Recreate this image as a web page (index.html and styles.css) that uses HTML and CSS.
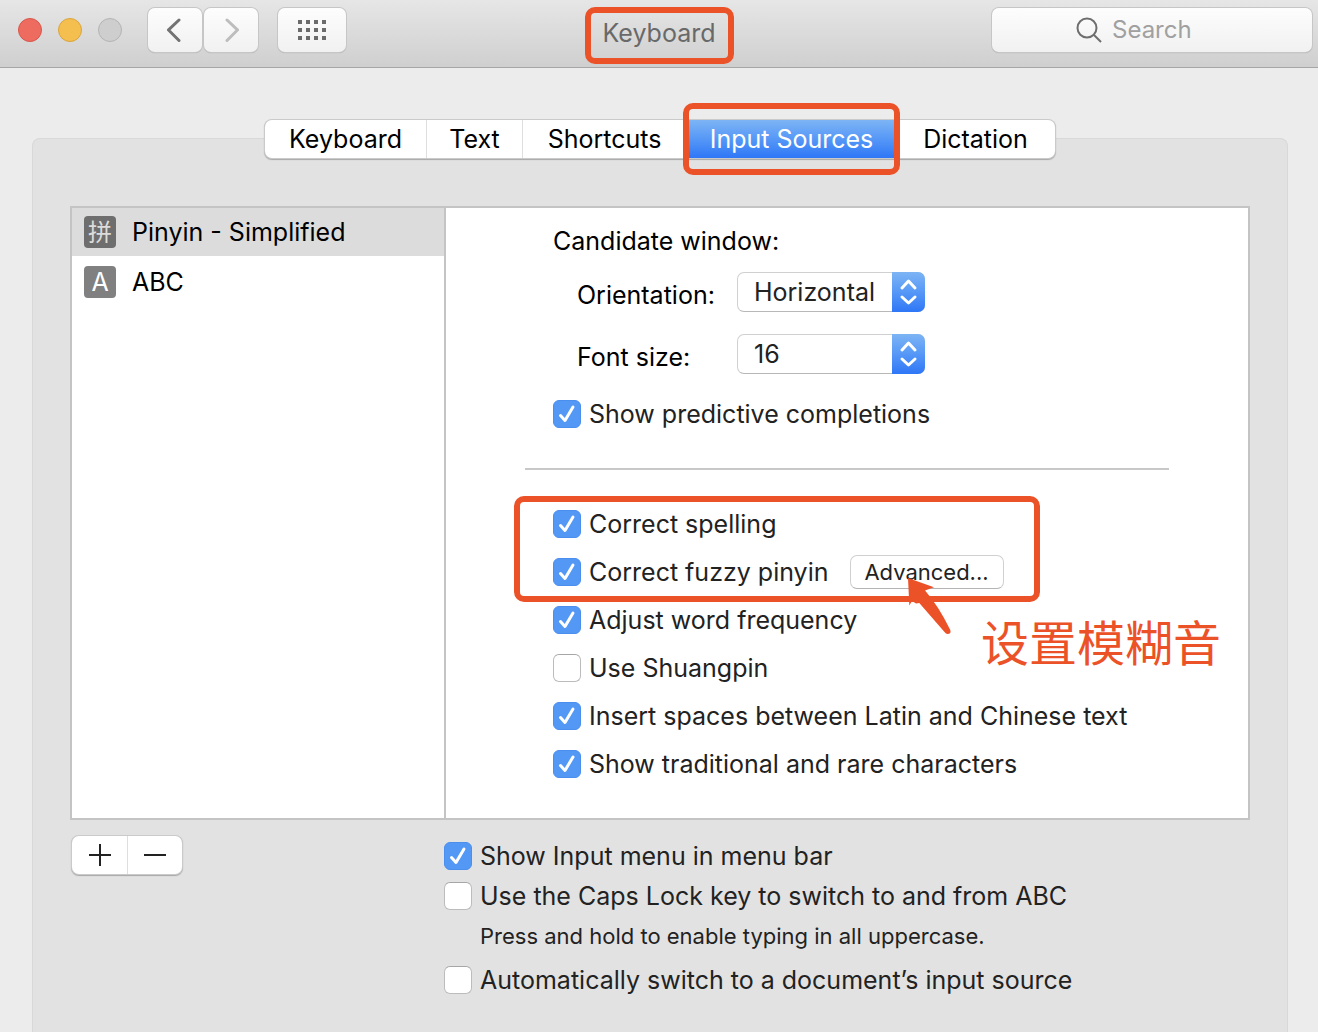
FILE: index.html
```html
<!DOCTYPE html>
<html lang="en">
<head>
<meta charset="utf-8">
<meta name="viewport" content="width=device-width, initial-scale=1">
<title>Keyboard</title>
<link rel="stylesheet" href="styles.css">
</head>
<body>
<header class="titlebar">
  <div class="titlebar-left">
    <div class="lights">
      <button class="light light-close" type="button" aria-label="Close"></button>
      <button class="light light-minimize" type="button" aria-label="Minimize"></button>
      <button class="light" type="button" aria-label="Zoom" disabled></button>
    </div>
    <nav class="history" aria-label="History">
      <button class="tool" type="button" aria-label="Back">
        <svg width="16" height="26" viewBox="0 0 16 26" fill="none" stroke="#737373" stroke-width="3" stroke-linecap="round"><path d="M12 3 1.500 13l10.500 10.500"/></svg>
      </button>
      <button class="tool" type="button" aria-label="Forward">
        <svg width="16" height="26" viewBox="0 0 16 26" fill="none" stroke="#bdbdbd" stroke-width="3" stroke-linecap="round"><path d="M4 3l10.500 10L4 23.500"/></svg>
      </button>
    </nav>
    <button class="tool tool-grid" type="button" aria-label="Show all">
      <svg width="28" height="20" viewBox="0 0 28 20" fill="#6b6b6b"><path d="M0 0h4v4H0zM8 0h4v4H8zM16 0h4v4h-4zM24 0h4v4h-4zM0 8h4v4H0zM8 8h4v4H8zM16 8h4v4h-4zM24 8h4v4h-4zM0 16h4v4H0zM8 16h4v4H8zM16 16h4v4h-4zM24 16h4v4h-4z"/></svg>
    </button>
  </div>
  <h1 class="title marked">Keyboard</h1>
  <label class="search">
    <svg width="26" height="26" viewBox="0 0 26 26" fill="none" stroke="#6e6e6e" stroke-width="2"><circle cx="11" cy="11" r="9.500"/><path d="M18 18l7 7"/></svg>
    <input class="search-input" type="text" placeholder="Search" aria-label="Search">
  </label>
</header>

<main class="content">
  <section class="panel">
    <div class="tabs" role="tablist">
      <button class="tab" type="button" role="tab">Keyboard</button>
      <button class="tab" type="button" role="tab">Text</button>
      <button class="tab" type="button" role="tab">Shortcuts</button>
      <button class="tab tab-active marked" type="button" role="tab" aria-selected="true">Input Sources</button>
      <button class="tab" type="button" role="tab">Dictation</button>
    </div>

    <div class="split">
      <ul class="sources">
        <li class="source source-selected"><span class="badge badge-pinyin">拼</span>Pinyin - Simplified</li>
        <li class="source"><span class="badge">A</span>ABC</li>
      </ul>

      <div class="options">
        <h2 class="heading">Candidate window:</h2>
        <div class="fields">
          <label class="field-label" for="orientation">Orientation:</label>
          <div class="picker">
            <select class="select" id="orientation"><option>Horizontal</option><option>Vertical</option></select>
            <svg class="stepper" width="33" height="40" viewBox="0 0 33 40" fill="none" stroke="#fff" stroke-width="3" stroke-linecap="round" stroke-linejoin="round"><path d="M10 16l6.500-7 6.500 7M10 25l6.500 6 6.500-6"/></svg>
          </div>
          <label class="field-label" for="size">Font size:</label>
          <div class="picker">
            <select class="select" id="size"><option>16</option><option>18</option></select>
            <svg class="stepper" width="33" height="40" viewBox="0 0 33 40" fill="none" stroke="#fff" stroke-width="3" stroke-linecap="round" stroke-linejoin="round"><path d="M10 16l6.500-7 6.500 7M10 25l6.500 6 6.500-6"/></svg>
          </div>
        </div>
        <div class="checks">
          <label class="check"><input class="box" type="checkbox" checked>Show predictive completions</label>
        </div>
        <hr class="rule">
        <div class="checks">
          <div class="callout">
            <label class="check"><input class="box" type="checkbox" checked>Correct spelling</label>
            <div class="fuzzy">
              <label class="check"><input class="box" type="checkbox" checked>Correct fuzzy pinyin</label>
              <button class="advanced" type="button">Advanced...</button>
            </div>
            <svg class="arrow" width="50" height="64" viewBox="0 0 50 64" fill="#ec5228"><path d="M4 4 30 13.300 21 16.500Q34 31 46.300 56 47.500 60 43.500 60 42 60 40.500 58L15.300 29 12 29.500 8 27 5.300 31.500Z"/></svg>
            <p class="note" lang="zh-CN">设置模糊音</p>
          </div>
          <label class="check"><input class="box" type="checkbox" checked>Adjust word frequency</label>
          <label class="check"><input class="box" type="checkbox">Use Shuangpin</label>
          <label class="check"><input class="box" type="checkbox" checked>Insert spaces between Latin and Chinese text</label>
          <label class="check"><input class="box" type="checkbox" checked>Show traditional and rare characters</label>
        </div>
      </div>
    </div>

    <div class="footer">
      <div class="addremove">
        <button class="seg" type="button" aria-label="Add"><svg width="22" height="22" viewBox="0 0 22 22" stroke="#222" stroke-width="2"><path d="M0 11h22M11 0v22"/></svg></button>
        <button class="seg" type="button" aria-label="Remove"><svg width="22" height="22" viewBox="0 0 22 22" stroke="#222" stroke-width="2"><path d="M0 11h22"/></svg></button>
      </div>
      <div class="footer-checks">
        <label class="check"><input class="box" type="checkbox" checked>Show Input menu in menu bar</label>
        <label class="check"><input class="box" type="checkbox" aria-describedby="caps-hint">Use the Caps Lock key to switch to and from ABC</label>
        <p class="hint" id="caps-hint">Press and hold to enable typing in all uppercase.</p>
        <label class="check"><input class="box" type="checkbox">Automatically switch to a document’s input source</label>
      </div>
    </div>
  </section>
</main>
</body>
</html>
```

FILE: styles.css
```css
:root {
  --mark: #ec5228;
  --line: #c4c4c4;
  --blue: linear-gradient(#7db4f4, #5a9bf7 45%, #2e77f6);
}

*,
*::after {
  box-sizing: border-box;
}

body {
  margin: 0;
  min-height: 100vh;
  display: flex;
  flex-direction: column;
  background: #ececec;
  color: #000;
  font: 25px/32px Inter, "Liberation Sans", "Noto Sans CJK SC", sans-serif;
}

button,
input,
select {
  margin: 0;
  padding: 0;
  border: 0;
  font: inherit;
  color: inherit;
}

h1,
h2,
p,
ul {
  margin: 0;
  padding: 0;
  font-size: inherit;
  font-weight: 400;
  list-style: none;
}

svg {
  display: block;
}

/* Title bar */
.titlebar {
  display: grid;
  grid-template-columns: 1fr auto 1fr;
  align-items: start;
  height: 68px;
  padding: 8px 6px;
  border-bottom: 1px solid #a6a6a6;
  background: linear-gradient(#e6e6e6, #cfcfcf);
}

.titlebar-left {
  display: flex;
  align-items: center;
  height: 44px;
  padding-left: 12px;
}

.lights {
  display: flex;
  gap: 16px;
  margin-right: 26px;
}

.light {
  width: 24px;
  height: 24px;
  border: 1px solid #b4b4b4;
  border-radius: 50%;
  background: #cecece;
}

.light-close {
  border-color: #d8564b;
  background: #ee6b5f;
}

.light-minimize {
  border-color: #d9a53c;
  background: #f5bf4f;
}

.history {
  display: flex;
  gap: 2px;
  margin-right: 20px;
}

.tool {
  display: flex;
  align-items: center;
  justify-content: center;
  width: 54px;
  height: 44px;
  border-radius: 7px;
  background: linear-gradient(#fdfdfd, #f1f1f1);
  box-shadow: 0 0 0 1px #c6c6c6, 0 1px 1px #9c9c9c;
}

.tool-grid {
  width: 68px;
}

.marked {
  position: relative;
}

.marked::after,
.callout::after {
  content: "";
  position: absolute;
  border: 6px solid var(--mark);
  border-radius: 10px;
  pointer-events: none;
}

.title {
  padding: 9px 0;
  color: #696969;
}

.title::after {
  inset: -1px -19px -6px -18px;
}

.search {
  display: flex;
  align-items: center;
  gap: 10px;
  justify-self: end;
  width: 320px;
  height: 44px;
  padding-left: 84px;
  border-radius: 7px;
  background: linear-gradient(#fdfdfd, #f1f1f1);
  box-shadow: 0 0 0 1px #c6c6c6, 0 1px 1px #9c9c9c;
}

.search-input {
  flex: 1;
  min-width: 0;
  background: transparent;
  outline: 0;
  font-size: 24px;
}

.search-input::placeholder {
  color: #a0a0a0;
  opacity: 1;
}

/* Panel and tabs */
.content {
  flex: 1;
  display: flex;
  padding: 70px 30px 0 32px;
}

.panel {
  flex: 1;
  padding: 0 37px 32px;
  border: 1px solid #d8d8d8;
  border-bottom: 0;
  border-radius: 8px 8px 0 0;
  background: #e2e2e2;
}

.tabs {
  display: grid;
  grid-template-columns: 162px 96px 164px 209px 159px;
  width: max-content;
  height: 38px;
  margin: -19px auto 48px;
  border-radius: 7px;
  background: #fff;
  box-shadow: 0 0 0 1px #cacaca, 0 1px 1px 1px #a8a8a8;
}

.tab {
  border-right: 1px solid #dedede;
  background: transparent;
  white-space: nowrap;
}

.tab:last-child {
  border-right: 0;
}

.tab-active {
  border-right: 0;
  background: var(--blue);
  color: #fff;
}

.tab-active::after {
  inset: -17px -4px;
}

/* Source list and options */
.split {
  display: grid;
  grid-template-columns: 374px 1fr;
  border: 2px solid var(--line);
  background: #fff;
}

.sources {
  border-right: 2px solid var(--line);
}

.source {
  display: flex;
  align-items: center;
  gap: 16px;
  height: 52px;
  padding-left: 12px;
}

.source-selected {
  height: 48px;
  background: #dcdcdc;
}

.badge {
  width: 32px;
  height: 32px;
  border-radius: 4px;
  background: #808080;
  color: #fff;
  text-align: center;
}

.badge-pinyin {
  background: #6e6e6e;
  color: #dcdcdc;
  font-family: "Noto Sans CJK SC", sans-serif;
  font-size: 24px;
  line-height: 30px;
}

.options {
  padding: 17px 79px 30px;
}

.heading {
  padding-left: 28px;
}

.fields {
  display: grid;
  grid-template-columns: 160px 188px;
  gap: 22px 0;
  margin: 15px 0 16px 52px;
}

.field-label {
  padding-top: 7px;
}

.picker {
  position: relative;
  height: 40px;
}

.select {
  appearance: none;
  width: 100%;
  height: 40px;
  padding: 0 33px 0 16px;
  border: 1px solid #d0d0d0;
  border-bottom-color: #b8b8b8;
  border-radius: 7px;
  background: #fff;
  color: #222;
}

.stepper {
  position: absolute;
  top: 0;
  right: 0;
  border-radius: 0 7px 7px 0;
  background: var(--blue);
  pointer-events: none;
}

.checks {
  display: flex;
  flex-direction: column;
  align-items: flex-start;
  padding-left: 28px;
}

.check {
  display: flex;
  align-items: center;
  gap: 8px;
  height: 48px;
  color: #222;
  white-space: nowrap;
}

.box {
  appearance: none;
  flex: none;
  width: 28px;
  height: 28px;
  border: 1px solid #bcbcbc;
  border-top-color: #a6a6a6;
  border-radius: 6px;
  background: #fff;
}

.box:checked {
  border-color: #4a8eee;
  background: #5398f5 url("data:image/svg+xml,%3Csvg xmlns='http://www.w3.org/2000/svg' viewBox='0 0 26 26' fill='none' stroke='white' stroke-width='3' stroke-linecap='round' stroke-linejoin='round'%3E%3Cpath d='M6.500 14.500l4.500 5L19 6'/%3E%3C/svg%3E") center / 26px;
}

.rule {
  height: 2px;
  margin: 30px 0;
  border: 0;
  background: #c8c8c8;
}

.callout {
  position: relative;
}

.callout::after {
  top: -4px;
  bottom: -6px;
  left: -39px;
  width: 526px;
}

.fuzzy {
  display: flex;
  align-items: center;
  gap: 21px;
}

.advanced {
  width: 154px;
  height: 34px;
  border: 1px solid #d0d0d0;
  border-bottom-color: #b4b4b4;
  border-radius: 7px;
  background: #fff;
  color: #222;
  font-size: 22px;
  line-height: 28px;
}

.arrow {
  position: absolute;
  z-index: 1;
  top: 74px;
  left: 351px;
}

.note {
  position: absolute;
  top: 108px;
  left: 428px;
  color: var(--mark);
  font: 400 48px/64px "Noto Sans CJK SC", sans-serif;
  white-space: nowrap;
}

/* Footer */
.footer {
  display: grid;
  grid-template-columns: 374px 1fr;
  align-items: start;
  padding-top: 16px;
}

.addremove {
  display: flex;
  width: max-content;
  margin-left: 2px;
  border-radius: 7px;
  background: #fff;
  box-shadow: 0 0 0 1px #cacaca, 0 1px 1px 1px #a8a8a8;
}

.seg {
  display: flex;
  align-items: center;
  justify-content: center;
  width: 55px;
  height: 38px;
  background: transparent;
}

.seg + .seg {
  border-left: 1px solid #dedede;
}

.footer-checks .check {
  height: 40px;
}

.hint {
  padding: 4px 0 8px 36px;
  color: #222;
  font-size: 22px;
}
```
